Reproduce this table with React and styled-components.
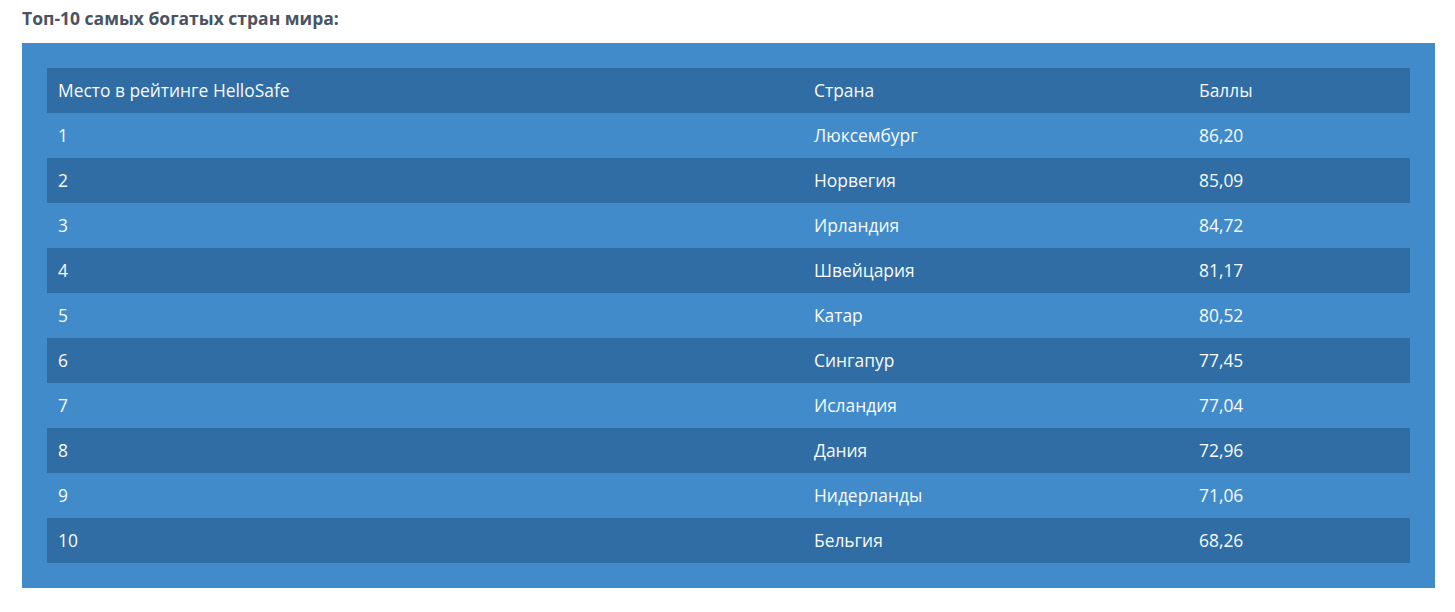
import React from 'react';
import styled, { createGlobalStyle } from 'styled-components';

const GlobalStyle = createGlobalStyle`
    body {
        margin: 0;
        background: #ffffff;
        font-family: "Open Sans", "Liberation Sans", sans-serif;
    }
`

const Page = styled.div`
    padding: 6px 20px 0 22px;
`

const Title = styled.h3`
    margin: 0 0 13px 0;
    font-size: 17.5px;
    line-height: 24px;
    font-weight: 700;
    color: #4a5462;
`

const Panel = styled.div`
    background: #428bca;
    padding: 25px;
`

const Table = styled.table`
    width: 100%;
    border-collapse: collapse;
    table-layout: fixed;
`

const Row = styled.tr`
    height: 45px;
    background: ${props => props.$dark ? '#306da5' : 'transparent'};
`

const Cell = styled.td`
    padding: 0 11px 2px 11px;
    font-size: 17.4px;
    font-weight: 400;
    color: #f7fafd;
    text-align: left;
    vertical-align: middle;
    white-space: nowrap;
`

const rows = [
    ['1', 'Люксембург', '86,20'],
    ['2', 'Норвегия', '85,09'],
    ['3', 'Ирландия', '84,72'],
    ['4', 'Швейцария', '81,17'],
    ['5', 'Катар', '80,52'],
    ['6', 'Сингапур', '77,45'],
    ['7', 'Исландия', '77,04'],
    ['8', 'Дания', '72,96'],
    ['9', 'Нидерланды', '71,06'],
    ['10', 'Бельгия', '68,26'],
]

export default function App() {
    return (
        <Page>
            <GlobalStyle />
            <Title>Топ-10 самых богатых стран мира:</Title>
            <Panel>
                <Table>
                    <colgroup>
                        <col style={{ width: 756 }} />
                        <col style={{ width: 385 }} />
                        <col />
                    </colgroup>
                    <tbody>
                        <Row $dark>
                            <Cell>Место в рейтинге HelloSafe</Cell>
                            <Cell>Страна</Cell>
                            <Cell>Баллы</Cell>
                        </Row>
                        {rows.map((r, i) => (
                            <Row key={r[0]} $dark={i % 2 === 1}>
                                <Cell>{r[0]}</Cell>
                                <Cell>{r[1]}</Cell>
                                <Cell>{r[2]}</Cell>
                            </Row>
                        ))}
                    </tbody>
                </Table>
            </Panel>
        </Page>
    )
}
